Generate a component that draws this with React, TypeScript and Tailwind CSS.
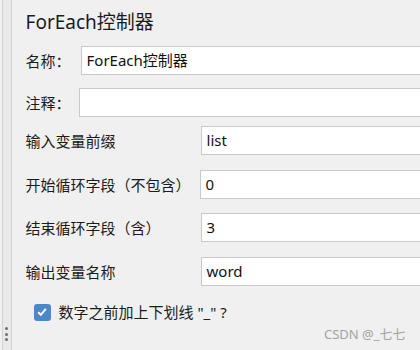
import React from "react";

const font = { fontFamily: '"Noto Sans", "Noto Sans CJK SC", sans-serif' };

function Row({ label, labelW, value, mt }: { label: string; labelW: string; value: string; mt: string }) {
  return (
    <div className={`flex items-center h-[29px] ${mt}`}>
      <div className={`${labelW} shrink-0 text-[15px] leading-[20px] text-[#1b1b1b]`}>{label}</div>
      <div className="w-[400px] shrink-0 h-[29px] bg-white border border-[#c9c9c9] flex items-center pl-[5px] text-[15px] text-[#111]">
        {value}
      </div>
    </div>
  );
}

export default function App() {
  return (
    <div className="relative w-[420px] h-[350px] overflow-hidden bg-[#f0f0f0] flex" style={font}>
      <div className="ml-[2px] w-[13px] h-full bg-[#e9e9e9] border-l border-r border-[#d3d3d3] flex flex-col items-center justify-end pb-[9px] gap-[2.5px]">
        <div className="w-[3px] h-[3px] rounded-full bg-[#6e6e6e]" />
        <div className="w-[3px] h-[3px] rounded-full bg-[#6e6e6e]" />
        <div className="w-[3px] h-[3px] rounded-full bg-[#6e6e6e]" />
      </div>
      <div className="flex flex-col pl-[14px] min-w-0">
        <div className="pt-[9px] h-[35px] text-[19px] leading-[26px] text-[#1b1b1b]">ForEach控制器</div>
        <Row label="名称：" labelW="w-[55px]" value="ForEach控制器" mt="mt-[11px]" />
        <Row label="注释：" labelW="w-[53px]" value="" mt="mt-[13px]" />
        <Row label="输入变量前缀" labelW="w-[175px]" value="list" mt="mt-[9px]" />
        <Row label="开始循环字段（不包含）" labelW="w-[174px]" value="0" mt="mt-[15px]" />
        <Row label="结束循环字段（含）" labelW="w-[175px]" value="3" mt="mt-[14px]" />
        <Row label="输出变量名称" labelW="w-[175px]" value="word" mt="mt-[15px]" />
        <div className="flex items-center h-[18px] mt-[17px] ml-[8px]">
          <div className="w-[17px] h-[17px] rounded-[3px] bg-[#4a87cb] flex items-center justify-center">
            <svg width="12" height="12" viewBox="0 0 12 12">
              <path d="M2.2 6.2 L4.8 8.8 L9.8 2.8" stroke="white" strokeWidth="2" fill="none" />
            </svg>
          </div>
          <div className="ml-[8px] text-[15px] leading-[20px] text-[#1b1b1b]">数字之前加上下划线 "_" ?</div>
        </div>
      </div>
      <div className="absolute left-[324px] top-[325px] text-[13px] leading-[18px] text-[#a3a3a3]">CSDN @_七七</div>
    </div>
  );
}
